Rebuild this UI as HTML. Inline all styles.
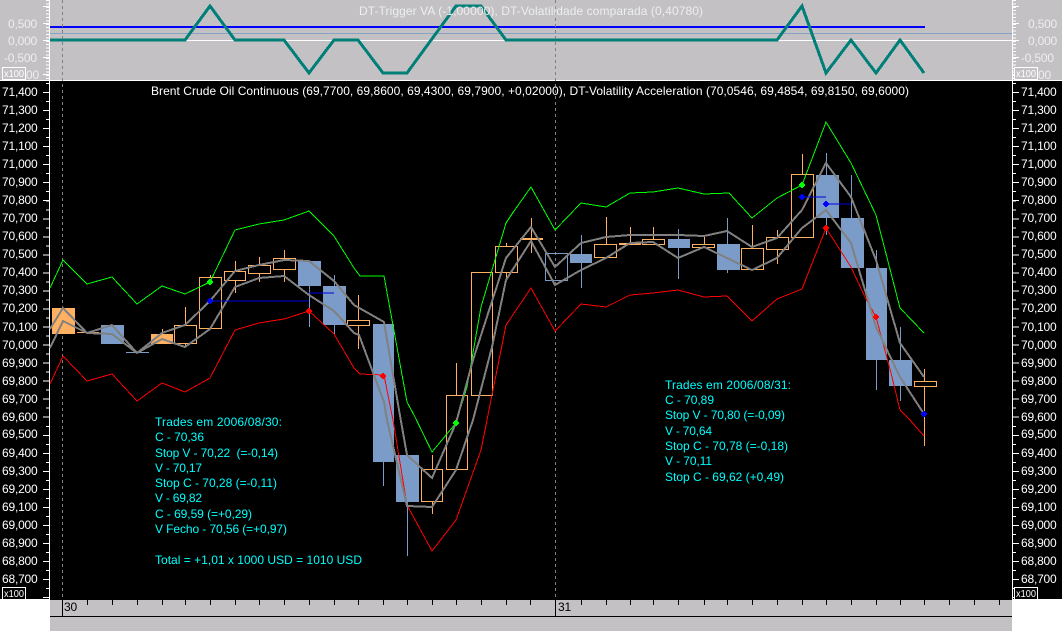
<!DOCTYPE html>
<html><head><meta charset="utf-8"><style>
html,body{margin:0;padding:0;background:#fff}
svg{display:block}
text{font-family:"Liberation Sans",sans-serif;font-size:12px;letter-spacing:-.2px}
text[textLength]{letter-spacing:0}
.w text{fill:#fff}.c text{fill:#0ff}
.t text{fill:#eee}
</style></head><body>
<svg width="1062" height="631" viewBox="0 0 1062 631" xmlns="http://www.w3.org/2000/svg">
<rect width="1062" height="631" fill="#fff"/>
<rect x="0" y="0" width="1062" height="80" fill="#c3c1c4"/>
<rect x="0" y="81" width="1062" height="518" fill="#000"/>
<rect x="50" y="599" width="962" height="1" fill="#000"/>
<rect x="50" y="600" width="962" height="31" fill="#c3c1c4"/>
<g shape-rendering="crispEdges">
<rect x="0" y="80" width="1062" height="1" fill="#fff"/>
<path d="M49.5 0V599M1012.5 0V599" stroke="#fff" fill="none"/>
<path d="M47.5 83V599M1014.5 83V599" stroke="#fff" stroke-width="3" stroke-dasharray="1 8.02" fill="none"/>
<path d="M46 92V599M1016 92V599" stroke="#fff" stroke-width="6" stroke-dasharray="1 17.04" fill="none"/>
<path d="M47.5 0V80M1014.5 0V80" stroke="#fff" stroke-width="3" stroke-dasharray="1 2.4" fill="none"/>
<path d="M43 6.5H49M43 23.5H49M43 40.5H49M43 57.5H49M43 74.5H49M1013 6.5H1019M1013 23.5H1019M1013 40.5H1019M1013 57.5H1019M1013 74.5H1019" stroke="#fff" fill="none"/>
<rect x="50" y="40" width="962" height="1" fill="#fff"/>
<rect x="50" y="33" width="962" height="1" fill="#88a2c6"/>
<rect x="50" y="26" width="875" height="2" fill="#0000ff"/>
<polyline fill="none" stroke="#007f78" stroke-width="3" points="50,40 185,40 210,6 235,40 284,40 309,73 334,40 358,40 383,73 407,73 456,6 481,6 506,40 777,40 802,6 826,73 851,40 876,73 900,40 924,73"/>
<path d="M62.5 0V600M555.5 0V600" stroke="#808080" stroke-dasharray="3 3" fill="none"/>
<path d="M50 616.5H1012M62.5 600V616M555.5 600V616" stroke="#000" fill="none"/>
<path d="M87.5 600v5M112.5 600v5M137.5 600v5M162.5 600v5M185.5 600v5M210.5 600v5M235.5 600v5M259.5 600v5M284.5 600v5M309.5 600v5M334.5 600v5M358.5 600v5M383.5 600v5M407.5 600v5M432.5 600v5M456.5 600v5M481.5 600v5M506.5 600v5M530.5 600v5M581.5 600v5M606.5 600v5M630.5 600v5M653.5 600v5M678.5 600v5M704.5 600v5M727.5 600v5M752.5 600v5M777.5 600v5M802.5 600v5M826.5 600v5M851.5 600v5M876.5 600v5M900.5 600v5M924.5 600v5M949.5 600v5M974.5 600v5M999.5 600v5" stroke="#000" fill="none"/>

<!-- candles fill -->
<g fill="#ffb060">
<rect x="52" y="308" width="23" height="26"/>
<rect x="77" y="332" width="22" height="1"/>
<rect x="151" y="334" width="22" height="10"/>
<rect x="520" y="238" width="23" height="2"/>
<rect x="619" y="243" width="22" height="2"/>
</g>
<g fill="#7b9cc8">
<rect x="101" y="325" width="23" height="19"/>
<rect x="126" y="352" width="23" height="1"/>
<rect x="298" y="261" width="23" height="25"/>
<rect x="323" y="286" width="23" height="39"/>
<rect x="373" y="324" width="21" height="138"/>
<rect x="396" y="455" width="23" height="47"/>
<rect x="570" y="254" width="22" height="9"/>
<rect x="668" y="239" width="22" height="9"/>
<rect x="717" y="244" width="23" height="26"/>
<rect x="816" y="175" width="23" height="43"/>
<rect x="841" y="218" width="23" height="50"/>
<rect x="866" y="268" width="21" height="92"/>
<rect x="889" y="360" width="23" height="26"/>
</g>
<g fill="none" stroke="#ffb060">
<rect x="174.5" y="325.5" width="22" height="18"/>
<rect x="199.5" y="277.5" width="22" height="51"/>
<rect x="224.5" y="271.5" width="21" height="9"/>
<rect x="248.5" y="265.5" width="22" height="8"/>
<rect x="273.5" y="258.5" width="22" height="11"/>
<rect x="347.5" y="320.5" width="22" height="5"/>
<rect x="421.5" y="469.5" width="21" height="32"/>
<rect x="446.5" y="395.5" width="21" height="74"/>
<rect x="471.5" y="272.5" width="21" height="123"/>
<rect x="495.5" y="246.5" width="22" height="26"/>
<rect x="594.5" y="244.5" width="22" height="13"/>
<rect x="642.5" y="239.5" width="22" height="5"/>
<rect x="692.5" y="244.5" width="22" height="3"/>
<rect x="741.5" y="248.5" width="22" height="21"/>
<rect x="766.5" y="237.5" width="22" height="12"/>
<rect x="791.5" y="174.5" width="22" height="63"/>
<rect x="914.5" y="381.5" width="22" height="5"/>
<path d="M162.5 329V334M185.5 307V325M185.5 344V347M210.5 275V277M235.5 261V271M235.5 281V293M259.5 257V265M259.5 273V282M284.5 250V258M284.5 270V282M358.5 295V320M358.5 326V349M432.5 455V469M432.5 502V514M456.5 363V395M506.5 243V246M506.5 272V278M531.5 218V253M606.5 217V244M630.5 227V243M653.5 227V239M704.5 236V244M752.5 225V248M777.5 230V237M777.5 249V264M802.5 154V174M924.5 369V381M924.5 386V446"/>
</g>
<g fill="none" stroke="#7b9cc8">
<rect x="545.5" y="253.5" width="22" height="27"/>
<path d="M309.5 286V327M334.5 275V286M334.5 325V334M383.5 462V486M407.5 502V556M581.5 235V254M581.5 263V288M678.5 229V239M678.5 248V279M727.5 218V244M727.5 270V273M826.5 153V175M826.5 218V235M851.5 175V218M876.5 250V268M876.5 360V390M900.5 327V360M900.5 386V401"/>
</g>
<!-- lines -->
<polyline fill="none" stroke="#00ff00" points="50,288 63,260 87,284 112,277 137,304 162,286 185,294 210,282 235,230 259,224 284,220 309,211 334,236 354,268 360,276 384,276 407,402 414,415 432,452 456,423 467,387 481,307 506,223 514,211 531,187 555,230 581,203 606,207 630,193 653,192 678,188 704,194 729,193 752,218 777,198 802,185 826,122 851,163 876,215 900,308 924,333"/>
<polyline fill="none" stroke="#ff0000" points="50,384 63,356 87,381 112,374 137,401 162,383 185,392 210,378 235,330 259,323 284,319 309,311 334,334 354,368 360,374 384,375 393,420 407,505 432,551 456,520 481,450 487,420 506,325 531,288 555,331 581,304 606,307 630,295 653,293 678,290 704,297 727,296 752,321 777,299 802,289 826,228 851,267 865,297 876,317 891,373 900,410 910,420 924,436"/>
<polyline fill="none" stroke="#808080" stroke-width="2" points="50,329 63,308 87,333 112,325 137,353 162,333 185,325 210,301 235,271 259,265 284,260 309,261 334,281 354,305 384,322 399,410 407,455 432,478 456,423 473,360 506,258 531,227 555,267 581,243 606,237 630,235 653,235 678,235 704,236 727,231 752,247 777,238 802,210 826,163 851,197 876,260 900,343 924,377"/>
<polyline fill="none" stroke="#808080" stroke-width="2" points="50,348 63,321 87,333 112,334 137,353 162,339 185,347 210,329 235,287 259,278 284,276 309,295 334,311 354,333 359,335 384,402 387,420 407,506 432,507 456,470 473,420 492,347 506,280 531,241 555,285 581,270 606,258 630,243 653,242 678,258 704,247 752,270 777,258 802,228 826,210 851,243 876,327 900,377 924,414"/>
<path d="M210 301H309M309 293H334M802 197H826M826 204H851" stroke="#0000e0" fill="none"/>
<g fill="#00ff00"><path d="M208 280h4v4h-4zM209 279h2v6h-2zM207 281h6v2h-6zM454 421h4v4h-4zM455 420h2v6h-2zM453 422h6v2h-6zM800 183h4v4h-4zM801 182h2v6h-2zM799 184h6v2h-6z"/></g>
<g fill="#ff0000"><path d="M307 309h4v4h-4zM308 308h2v6h-2zM306 310h6v2h-6zM381 374h4v4h-4zM382 373h2v6h-2zM380 375h6v2h-6zM824 226h4v4h-4zM825 225h2v6h-2zM823 227h6v2h-6zM874 315h4v4h-4zM875 314h2v6h-2zM873 316h6v2h-6z"/></g>
<g fill="#0000ff"><path d="M208 299h4v4h-4zM209 298h2v6h-2zM207 300h6v2h-6zM800 195h4v4h-4zM801 194h2v6h-2zM799 196h6v2h-6zM824 202h4v4h-4zM825 201h2v6h-2zM823 203h6v2h-6zM922 412h4v4h-4zM923 411h2v6h-2zM921 413h6v2h-6z"/></g>
</g>

<g class="t">
<text x="359" y="15" textLength="344" lengthAdjust="spacing">DT-Trigger VA (-1,00000), DT-Volatilidade comparada (0,40780)</text>
<text x="8" y="28">0,500</text><text x="8" y="45">0,000</text><text x="4" y="62">-0,500</text><text x="26" y="79">00</text>
<text x="1028" y="28">0,500</text><text x="1028" y="45">0,000</text><text x="1021" y="62">-0,500</text><text x="1038" y="79">00</text>
</g>
<g shape-rendering="crispEdges" fill="#c3c1c4" stroke="#fff"><rect x="2.5" y="67.5" width="23" height="12"/><rect x="1014.5" y="67.5" width="23" height="12"/></g>
<g fill="none" stroke="#fff" shape-rendering="crispEdges"><rect x="2.5" y="587.5" width="23" height="12" fill="#000"/><rect x="1014.5" y="587.5" width="23" height="12" fill="#000"/></g>
<g class="w">
<text x="151" y="95" textLength="758" lengthAdjust="spacing">Brent Crude Oil Continuous (69,7700, 69,8600, 69,4300, 69,7900, +0,02000), DT-Volatility Acceleration (70,0546, 69,4854, 69,8150, 69,6000)</text>
<g><text style="font-size:10px" x="4" y="77" textLength="20" lengthAdjust="spacingAndGlyphs">x100</text><text style="font-size:10px" x="1016" y="77" textLength="20" lengthAdjust="spacingAndGlyphs">x100</text><text style="font-size:10px" x="4" y="597" textLength="20" lengthAdjust="spacingAndGlyphs">x100</text><text style="font-size:10px" x="1016" y="597" textLength="20" lengthAdjust="spacingAndGlyphs">x100</text></g>
<text x="2" y="96">71,400</text><text x="2" y="114">71,300</text><text x="2" y="132">71,200</text><text x="2" y="150">71,100</text><text x="2" y="168">71,000</text><text x="2" y="186">70,900</text><text x="2" y="204">70,800</text><text x="2" y="222">70,700</text><text x="2" y="240">70,600</text><text x="2" y="258">70,500</text><text x="2" y="276">70,400</text><text x="2" y="294">70,300</text><text x="2" y="312">70,200</text><text x="2" y="331">70,100</text><text x="2" y="349">70,000</text><text x="2" y="367">69,900</text><text x="2" y="385">69,800</text><text x="2" y="403">69,700</text><text x="2" y="421">69,600</text><text x="2" y="438">69,500</text><text x="2" y="457">69,400</text><text x="2" y="475">69,300</text><text x="2" y="493">69,200</text><text x="2" y="511">69,100</text><text x="2" y="529">69,000</text><text x="2" y="547">68,900</text><text x="2" y="565">68,800</text><text x="2" y="583">68,700</text>
<text x="1021" y="96">71,400</text><text x="1021" y="114">71,300</text><text x="1021" y="132">71,200</text><text x="1021" y="150">71,100</text><text x="1021" y="168">71,000</text><text x="1021" y="186">70,900</text><text x="1021" y="204">70,800</text><text x="1021" y="222">70,700</text><text x="1021" y="240">70,600</text><text x="1021" y="258">70,500</text><text x="1021" y="276">70,400</text><text x="1021" y="294">70,300</text><text x="1021" y="312">70,200</text><text x="1021" y="331">70,100</text><text x="1021" y="349">70,000</text><text x="1021" y="367">69,900</text><text x="1021" y="385">69,800</text><text x="1021" y="403">69,700</text><text x="1021" y="421">69,600</text><text x="1021" y="438">69,500</text><text x="1021" y="457">69,400</text><text x="1021" y="475">69,300</text><text x="1021" y="493">69,200</text><text x="1021" y="511">69,100</text><text x="1021" y="529">69,000</text><text x="1021" y="547">68,900</text><text x="1021" y="565">68,800</text><text x="1021" y="583">68,700</text>
</g>
<g class="c">
<text x="155" y="426" textLength="127" lengthAdjust="spacing">Trades em 2006/08/30:</text>
<text x="155" y="441" textLength="49" lengthAdjust="spacing">C - 70,36</text>
<text x="155" y="457" textLength="123" lengthAdjust="spacing" xml:space="preserve">Stop V - 70,22  (=-0,14)</text>
<text x="155" y="472" textLength="47" lengthAdjust="spacing">V - 70,17</text>
<text x="155" y="487" textLength="122" lengthAdjust="spacing">Stop C - 70,28 (=-0,11)</text>
<text x="155" y="502" textLength="47" lengthAdjust="spacing">V - 69,82</text>
<text x="155" y="518" textLength="97" lengthAdjust="spacing">C - 69,59 (=+0,29)</text>
<text x="155" y="533" textLength="132" lengthAdjust="spacing">V Fecho - 70,56 (=+0,97)</text>
<text x="155" y="564" textLength="207" lengthAdjust="spacing">Total = +1,01 x 1000 USD = 1010 USD</text>
<text x="665" y="389" textLength="126" lengthAdjust="spacing">Trades em 2006/08/31:</text>
<text x="665" y="404" textLength="49" lengthAdjust="spacing">C - 70,89</text>
<text x="665" y="419" textLength="120" lengthAdjust="spacing">Stop V - 70,80 (=-0,09)</text>
<text x="665" y="435" textLength="47" lengthAdjust="spacing">V - 70,64</text>
<text x="665" y="450" textLength="123" lengthAdjust="spacing">Stop C - 70,78 (=-0,18)</text>
<text x="665" y="465" textLength="47" lengthAdjust="spacing">V - 70,11</text>
<text x="665" y="481" textLength="119" lengthAdjust="spacing">Stop C - 69,62 (+0,49)</text>
</g>
<text x="64" y="611" fill="#000">30</text>
<text x="558" y="611" fill="#000">31</text>
</svg>
</body></html>
